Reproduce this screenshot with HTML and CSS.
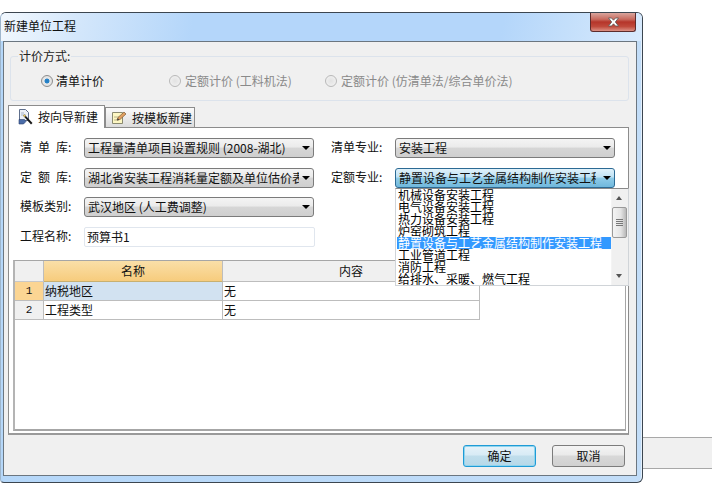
FILE: index.html
```html
<!DOCTYPE html>
<html lang="zh">
<head>
<meta charset="utf-8">
<title>新建单位工程</title>
<link rel="stylesheet" href="styles.css">
</head>
<body>
<div class="backstrip"></div>
<div class="dialog">
  <div class="titlebar">
    <span class="title">新建单位工程</span>
    <span class="close"><svg width="13" height="10" viewBox="0 0 13 10"><path d="M1.500 1h3L6.500 3.200 8.500 1h3L8.300 5l3.200 4h-3L6.500 6.800 4.500 9h-3l3.200-4z" fill="#fff" stroke="#555" stroke-width=".8"/></svg></span>
  </div>
  <div class="client">
    <div class="group">
      <span class="legend">计价方式:</span>
      <label class="radio r1"><i class="dot on"></i>清单计价</label>
      <label class="radio r2 off"><i class="dot"></i>定额计价 (工料机法)</label>
      <label class="radio r3 off"><i class="dot"></i>定额计价 (仿清单法/综合单价法)</label>
    </div>
    <div class="tabs">
      <div class="tab active">
        <svg class="ico" width="15" height="16" viewBox="0 0 15 16"><path d="M1.500.5h6l3 3v8h-9z" fill="#eef2f8" stroke="#5f6f8c"/><path d="M3 4h3M3 6h5" stroke="#a8b4c8"/><path d="M1 10.500h5.500l1.500 2-2.500 2.500H1z" fill="#4a6ca8" stroke="#2b3f6b" stroke-width=".6"/><path d="M5 6.500l1.500-1 8 8.500-1.500 1.500z" fill="#1a1a1a"/><path d="M5 6.500l1.500-1 1.500 1.600-1.500 1z" fill="#e8c860"/></svg>
        按向导新建
      </div>
      <div class="tab second">
        <svg class="ico" width="16" height="15" viewBox="0 0 16 15"><path d="M1.500 2.500h10v11h-10z" fill="#fdf7c3" stroke="#8a8a70"/><path d="M3 10h5M3 7h5" stroke="#b9b48a"/><path d="M6 10l1-2.500 6-5.500 2 2-6 5.500z" fill="#e0a060" stroke="#7d5a3a" stroke-width=".7"/><path d="M6 10.500l.8-2.300 1.500 1.300z" fill="#333"/></svg>
        按模板新建
      </div>
    </div>
    <div class="pane">
      <div class="form">
        <span class="lbl"><span class="spaced">清单</span>库:</span>
        <div class="select wide"><span>工程量清单项目设置规则 (2008-湖北)</span><i class="arrow"></i></div>
        <span class="lbl lbl2">清单专业:</span>
        <div class="select narrow"><span>安装工程</span><i class="arrow"></i></div>

        <span class="lbl"><span class="spaced">定额</span>库:</span>
        <div class="select wide"><span>湖北省安装工程消耗量定额及单位估价表</span><i class="arrow"></i></div>
        <span class="lbl lbl2">定额专业:</span>
        <div class="select narrow focus"><span>静置设备与工艺金属结构制作安装工程</span><i class="arrow"></i></div>

        <span class="lbl">模板类别:</span>
        <div class="select wide"><span>武汉地区 (人工费调整)</span><i class="arrow"></i></div>

        <span class="lbl">工程名称:</span>
        <div class="input">预算书1</div>
      </div>
      <div class="grid">
        <div class="cell corner"></div>
        <div class="cell head hname">名称</div>
        <div class="cell head hcontent">内容</div>
        <div class="cell num cur">1</div>
        <div class="cell name sel">纳税地区</div>
        <div class="cell val">无</div>
        <div class="cell num">2</div>
        <div class="cell name">工程类型</div>
        <div class="cell val">无</div>
      </div>
    </div>
    <div class="footer">
      <button class="btn default">确定</button>
      <button class="btn">取消</button>
    </div>
    <div class="dropdown">
      <div class="list">
        <div class="item first">机械设备安装工程</div>
        <div class="item">电气设备安装工程</div>
        <div class="item">热力设备安装工程</div>
        <div class="item">炉窑砌筑工程</div>
        <div class="item hi">静置设备与工艺金属结构制作安装工程</div>
        <div class="item">工业管道工程</div>
        <div class="item">消防工程</div>
        <div class="item">给排水、采暖、燃气工程</div>
      </div>
      <div class="scroll">
        <i class="up"></i>
        <div class="thumb"><b></b><b></b><b></b><b></b></div>
        <i class="down"></i>
      </div>
    </div>
  </div>
</div>
</body>
</html>
```
FILE: styles.css
```css
* { box-sizing: border-box; }
html, body { margin: 0; padding: 0; height: 492px; overflow: hidden; background: #fff; }
body {
  position: relative;
  font: 12px/16px "Noto Sans CJK SC", "Liberation Sans", sans-serif;
  color: #000;
}
.backstrip {
  position: absolute;
  left: 600px; right: 0; top: 437px; height: 32px;
  background: #f0f0f0;
  border-top: 1px solid #a8a8a8;
  border-bottom: 1px solid #a8a8a8;
}
.dialog {
  position: absolute;
  left: 0; top: 12px;
  width: 643px; height: 471px;
  border: 1px solid #3c4650;
  border-left-color: #9fb6cc;
  border-radius: 6px 6px 6px 4px;
  background: linear-gradient(90deg, #b5d7f9 0, #c2ddf8 100%);
  padding: 0 5px 6px 2px;
  box-shadow: inset -1px 0 0 #e4f0fc;
}
.titlebar {
  position: relative;
  height: 28px;
  margin: 0 -5px 0 -2px;
  border-radius: 5px 5px 0 0;
  background: linear-gradient(100deg, #f2f8fe 0, #d4e7fb 12%, #b4d6fa 30%, #b4d6fa 78%, #c4dffb 88%, #d8eafd 100%);
  padding: 5px 0 0 3px;
  font-size: 12px;
  color: #111;
}
.title { line-height: 16px; }
.close {
  position: absolute;
  left: 589px; top: 0;
  width: 46px; height: 19px;
  display: flex; align-items: center; justify-content: center;
  border: 1px solid #5d2c2c;
  border-top: 0;
  border-radius: 0 0 3px 3px;
  background: linear-gradient(#d9a59d 0, #c86a5e 35%, #b5352a 50%, #c04a3c 75%, #dc9185 100%);
}
.client {
  position: relative;
  height: 435px;
  background: #f0f0f0;
  border: 1px solid #6b7680;
  display: flex;
  flex-direction: column;
}
.group {
  position: relative;
  margin: 14px 7px 0 6px;
  height: 45px;
  border: 1px solid #dce3ec;
  border-radius: 3px;
}
.legend {
  position: absolute;
  left: 7px; top: -9px;
  padding: 0 1px;
  background: #f0f0f0;
  color: #222;
}
.radio {
  position: absolute;
  top: 16px;
  display: flex;
  align-items: center;
  gap: 3px;
  white-space: nowrap;
  color: #111;
}
.radio.off { color: #8a8a8a; }
.r1 { left: 30px; }
.r2 { left: 158px; gap: 4px; }
.r3 { left: 314px; gap: 4px; }
.dot {
  width: 12px; height: 12px;
  border-radius: 50%;
  border: 1px solid #b9b9b9;
  background: radial-gradient(circle, #e2e2e2 0, #efefef 70%);
}
.dot.on {
  border-color: #8d8d8d;
  background: radial-gradient(circle, #1e7cc4 0, #2a84c8 30%, #e8e8e8 40%, #dcdcdc 100%);
}
.tabs {
  display: flex;
  align-items: flex-end;
  margin: 4px 0 0 4px;
  height: 22px;
  position: relative;
  z-index: 1;
}
.tab {
  height: 20px;
  width: 90px;
  padding-left: 5px;
  display: flex;
  align-items: center;
  gap: 5px;
  border: 1px solid #8c8c8c;
  border-bottom: 0;
  background: linear-gradient(#fafafa, #ececec 50%, #dcdcdc);
  color: #111;
}
.tab.active {
  width: 97px;
  padding: 0 0 1px 9px;
  gap: 5px;
  background: #fff;
  margin-bottom: -1px;
  height: 23px;
}
.ico { flex: none; }
.pane {
  margin: 0 7px 0 4px;
  height: 308px;
  background: #fff;
  border: 1px solid #8c8c8c;
  border-bottom: 2px solid #9a9a9a;
  padding: 10px 2px 2px 4px;
  display: flex;
  flex-direction: column;
}
.form {
  display: grid;
  grid-template-columns: 64px 230px 17px 64px 220px;
  grid-template-rows: 20px 20px 20px 20px;
  row-gap: 9.5px;
  margin-left: 7px;
  align-items: center;
  height: 109px;
}
.form .lbl { color: #111; grid-column: 1; margin-top: -2px; }
.form .lbl.lbl2 { grid-column: 4; }
.spaced { letter-spacing: 6px; }
.select {
  height: 20px;
  border: 1px solid #7b7b7b;
  border-radius: 3px;
  background: linear-gradient(#f4f4f4 0, #ebebeb 45%, #d6d6d6 50%, #cfcfcf 100%);
  display: flex;
  align-items: center;
  padding: 0 1px 0 3px;
  position: relative;
  color: #111;
}
.select.wide { grid-column: 2; }
.select.narrow { grid-column: 5; }
.select span {
  flex: 1;
  overflow: hidden;
  white-space: nowrap;
}
.select.focus {
  border-color: #2c6a94;
  background: linear-gradient(#e0f1fa 0, #bfe2f4 45%, #8fcbe8 50%, #70b8dc 100%);
}
.select.focus span { margin-right: 4px; }
.arrow {
  width: 0; height: 0;
  margin: 0 2px 0 3px;
  border-left: 4px solid transparent;
  border-right: 4px solid transparent;
  border-top: 4px solid #000;
  flex: none;
}
.input {
  height: 20px;
  width: 231px;
  border: 1px solid #e0e6ee;
  border-radius: 2px;
  background: #fff;
  padding-left: 2px;
  line-height: 17px;
  color: #111;
}
.grid {
  flex: 1;
  margin-top: 13px;
  border: 2px solid #a6a6a6;
  border-top-width: 1px;
  border-right-width: 1px;
  border-left-color: #b4b4b4;
  background: #fff;
  display: grid;
  grid-template-columns: 29px 179px 257px;
  grid-template-rows: 21px 19px 19px;
  align-content: start;
}
.cell {
  border-right: 1px solid #bdbdbd;
  border-bottom: 1px solid #bdbdbd;
  display: flex;
  align-items: center;
  padding-left: 1px;
  color: #111;
}
.corner, .num, .hcontent { background: #f0f0f0; }
.corner { border-bottom-color: #c8c8c8; }
.head { justify-content: center; padding: 0; }
.hname {
  background: linear-gradient(#fadfa8, #f7cc7d);
  border-bottom-color: #c8b070;
}
.num { justify-content: center; padding: 0; font: 11px/16px "Liberation Mono", monospace; }
.num.cur { background: #fbd593; }
.sel { background: #d2e2f1; }
.footer {
  flex: 1;
  display: flex;
  justify-content: flex-end;
  align-items: flex-start;
  gap: 16px;
  padding: 10px 11px 0 0;
}
.btn {
  width: 73px; height: 22px;
  padding: 0;
  border: 1px solid #7c7c7c;
  border-radius: 3px;
  font: inherit;
  color: #111;
  background: linear-gradient(#f4f4f4 0, #eaeaea 45%, #d8d8d8 50%, #d0d0d0 100%);
}
.btn.default {
  border-color: #1f9bd6;
  box-shadow: inset 0 0 0 1px #8fd4ee;
  background: linear-gradient(#e6f2f9 0, #d8ebf5 45%, #c0deec 50%, #b6d8e8 100%);
}
.dropdown {
  position: absolute;
  left: 391px; top: 146px;
  width: 234px; height: 98px;
  background: #fff;
  border: 1px solid #d0d4d8;
  border-top: 1px solid #8a8a8a;
  display: flex;
  z-index: 5;
}
.list { flex: 1; overflow: hidden; padding: 0 0 0 1px; color: #000; }
.item {
  height: 12px;
  line-height: 12px;
  padding-left: 1px;
  white-space: nowrap;
}
.item.hi {
  background: #3399ff;
  color: #fff;
}
.scroll {
  width: 17px;
  background: #f0f0f0;
  position: relative;
  display: flex;
  flex-direction: column;
  align-items: center;
  border-left: 1px solid #f4f4f4;
}
.up, .down {
  width: 0; height: 0;
  border-left: 3.5px solid transparent;
  border-right: 3.5px solid transparent;
  position: absolute;
  left: 4px;
}
.up { top: 7px; border-bottom: 4px solid #555; }
.down { bottom: 7px; border-top: 4px solid #555; }
.thumb {
  position: absolute;
  left: 0; top: 18px;
  width: 15px; height: 31px;
  border: 1px solid #9a9a9a;
  border-radius: 2px;
  background: linear-gradient(90deg, #f4f4f4, #e4e4e4 60%, #b8b8b8);
  display: flex;
  flex-direction: column;
  justify-content: center;
  align-items: center;
  gap: 1px;
}
.thumb b { display: block; width: 7px; height: 1px; background: #777; }
```
